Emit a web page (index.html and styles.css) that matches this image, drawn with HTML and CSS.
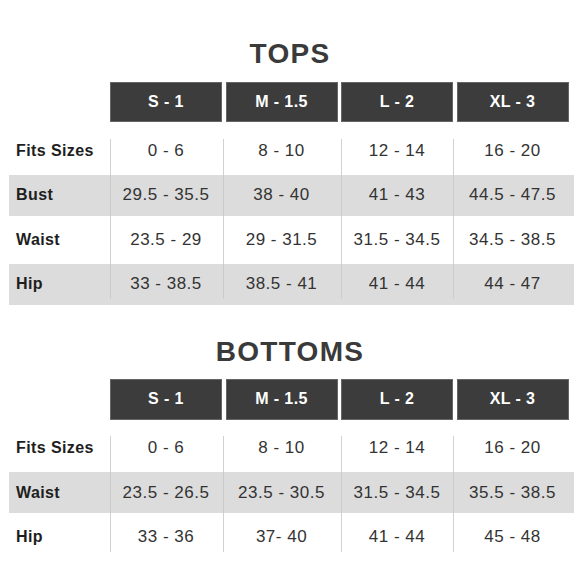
FILE: index.html
```html
<!DOCTYPE html>
<html>
<head>
<meta charset="utf-8">
<link rel="stylesheet" href="styles.css">
</head>
<body>
<section class="chart chart-tops">
  <h2 class="title">TOPS</h2>
  <div class="table">
    <div class="row head">
      <div class="label"></div>
      <div class="hcell">S - 1</div>
      <div class="hcell">M - 1.5</div>
      <div class="hcell">L - 2</div>
      <div class="hcell">XL - 3</div>
    </div>
    <div class="tbody">
      <div class="row">
        <div class="label">Fits Sizes</div>
        <div class="cell">0 - 6</div><div class="cell">8 - 10</div><div class="cell">12 - 14</div><div class="cell">16 - 20</div>
      </div>
      <div class="row shade">
        <div class="label">Bust</div>
        <div class="cell">29.5 - 35.5</div><div class="cell">38 - 40</div><div class="cell">41 - 43</div><div class="cell">44.5 - 47.5</div>
      </div>
      <div class="row">
        <div class="label">Waist</div>
        <div class="cell">23.5 - 29</div><div class="cell">29 - 31.5</div><div class="cell">31.5 - 34.5</div><div class="cell">34.5 - 38.5</div>
      </div>
      <div class="row shade">
        <div class="label">Hip</div>
        <div class="cell">33 - 38.5</div><div class="cell">38.5 - 41</div><div class="cell">41 - 44</div><div class="cell">44 - 47</div>
      </div>
    </div>
  </div>
</section>
<section class="chart chart-bottoms">
  <h2 class="title">BOTTOMS</h2>
  <div class="table">
    <div class="row head">
      <div class="label"></div>
      <div class="hcell">S - 1</div>
      <div class="hcell">M - 1.5</div>
      <div class="hcell">L - 2</div>
      <div class="hcell">XL - 3</div>
    </div>
    <div class="tbody">
      <div class="row">
        <div class="label">Fits Sizes</div>
        <div class="cell">0 - 6</div><div class="cell">8 - 10</div><div class="cell">12 - 14</div><div class="cell">16 - 20</div>
      </div>
      <div class="row shade">
        <div class="label">Waist</div>
        <div class="cell">23.5 - 26.5</div><div class="cell">23.5 - 30.5</div><div class="cell">31.5 - 34.5</div><div class="cell">35.5 - 38.5</div>
      </div>
      <div class="row">
        <div class="label">Hip</div>
        <div class="cell">33 - 36</div><div class="cell">37- 40</div><div class="cell">41 - 44</div><div class="cell">45 - 48</div>
      </div>
    </div>
  </div>
</section>
</body>
</html>
```
FILE: styles.css
```css
html, body {
  margin: 0;
  padding: 0;
  background: #ffffff;
}
body {
  width: 580px;
  height: 580px;
  overflow: hidden;
  font-family: "Liberation Sans", Arial, sans-serif;
  color: #333333;
}
.chart-tops {
  padding-top: 38px;
}
.chart-bottoms {
  margin-top: 31px;
}
.title {
  margin: 0 0 11.5px 0;
  height: 32px;
  line-height: 32px;
  font-size: 28px;
  font-weight: 700;
  letter-spacing: 1.3px;
  text-align: center;
  color: #3a3a3a;
}
.table {
  margin-left: 9px;
  width: 565px;
}
.row {
  display: grid;
  grid-template-columns: 97.5px repeat(4, 112px);
  column-gap: 3.5px;
  height: 41px;
}
.row.head {
  height: 40.5px;
}
.hcell {
  background: #3c3c3c;
  box-shadow: inset 0 0 0 1px #666666;
  color: #ffffff;
  font-weight: 700;
  font-size: 16px;
  letter-spacing: 0.4px;
  display: flex;
  align-items: center;
  justify-content: center;
}
.tbody {
  position: relative;
  margin-top: 8px;
  display: flex;
  flex-direction: column;
  gap: 3.5px;
}
.tbody::after {
  content: "";
  position: absolute;
  top: 8.5px;
  bottom: 6px;
  left: 0;
  right: 0;
  pointer-events: none;
  background:
    linear-gradient(#c9c9c9, #c9c9c9) 101px 0 / 1px 100% no-repeat,
    linear-gradient(#c9c9c9, #c9c9c9) 214px 0 / 1px 100% no-repeat,
    linear-gradient(#c9c9c9, #c9c9c9) 332px 0 / 1px 100% no-repeat,
    linear-gradient(#c9c9c9, #c9c9c9) 444px 0 / 1px 100% no-repeat;
  opacity: 0.85;
}
.row.shade {
  background: #dcdcdc;
}
.label {
  display: flex;
  align-items: center;
  padding-left: 7px;
  font-size: 16px;
  font-weight: 700;
  letter-spacing: 0.4px;
  color: #1e1e1e;
  white-space: nowrap;
}
.cell {
  display: flex;
  align-items: center;
  justify-content: center;
  font-size: 17px;
  letter-spacing: 0.5px;
  color: #333333;
  white-space: nowrap;
}
```
